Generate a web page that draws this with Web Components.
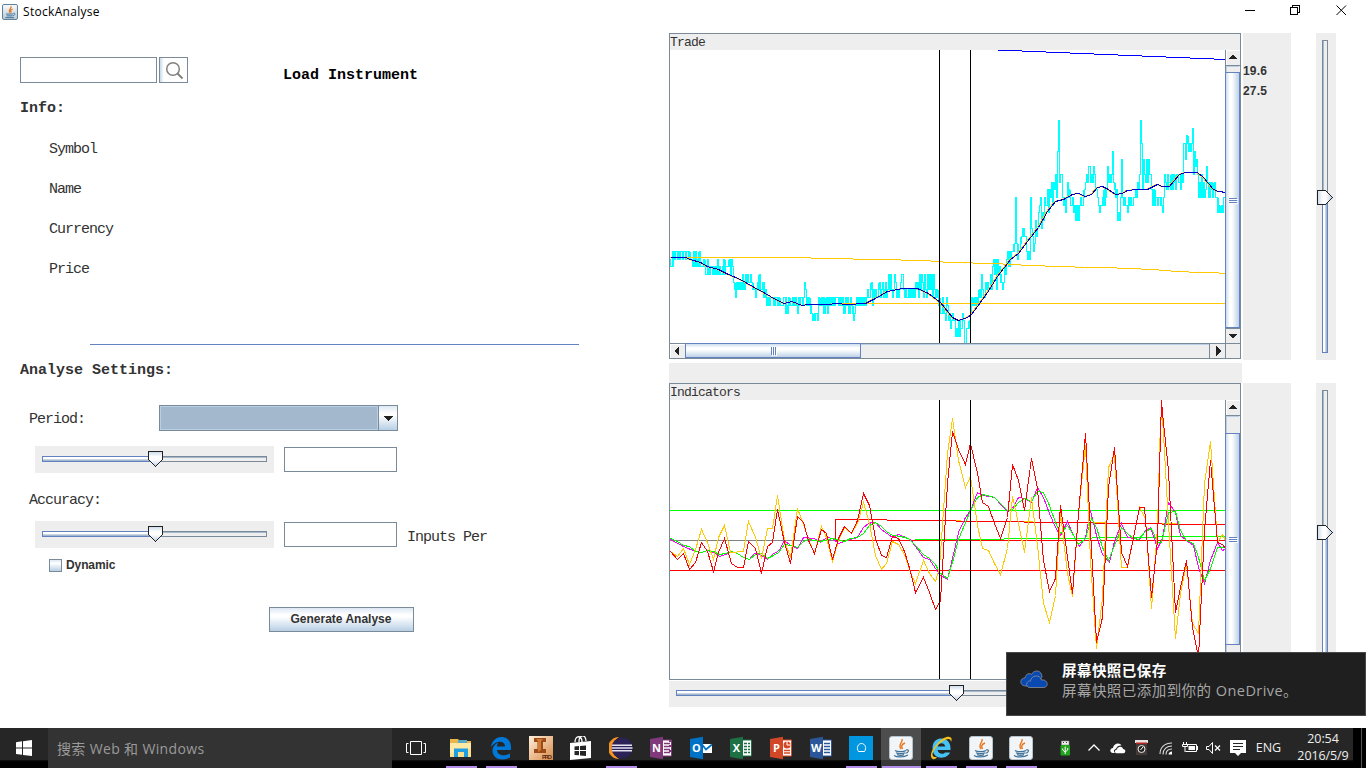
<!DOCTYPE html>
<html lang="en">
<head>
<meta charset="utf-8">
<title>StockAnalyse</title>
<style>
html,body{margin:0;height:100%;overflow:hidden;background:#fff}
body{font-family:"Liberation Sans",Arial,sans-serif;color:#333}
</style>
</head>
<body>
<stock-desktop></stock-desktop>
<script>
const define = (name, html, setup) => customElements.define(name, class extends HTMLElement {
  connectedCallback() {
    if (this.shadowRoot) return;
    const root = this.attachShadow({ mode: 'open' });
    root.innerHTML = typeof html === 'function' ? html(this) : html;
    if (setup) setup(this, root);
  }
});

/* ---------- small Swing widgets ---------- */
define('swing-field', `<style>
:host{display:block;box-sizing:border-box;border:1px solid #7a8a99;background:#fff;box-shadow:inset -1px 1px #fff}
</style>`);

define('swing-label', `<style>
:host{display:block;font:15px/20px "Liberation Mono",monospace;letter-spacing:-1px;color:#333;white-space:pre}
:host([bold]){font-weight:bold;letter-spacing:0}
:host([small]){font-size:13px;line-height:18px;letter-spacing:-.8px}
span{display:block;padding-top:2px;margin-bottom:-2px}
:host([small]) span{padding-top:0;margin:0}
</style><span><slot></slot></span>`);

define('swing-button', `<style>
:host{display:flex;align-items:center;justify-content:center;box-sizing:border-box;border:1px solid #7a8a99;
background:linear-gradient(#dde8f3,#fff 30%,#fff 38%,#b8cfe5);font:bold 12px "Liberation Sans",sans-serif;color:#333;white-space:nowrap}
</style><slot></slot>`);

define('swing-check', `<style>
:host{display:flex;align-items:center;gap:4px;font:bold 12px/14px "Liberation Sans",sans-serif;color:#333;letter-spacing:-.1px}
i{width:11px;height:11px;border:1px solid #7a8a99;background:linear-gradient(#dde8f3,#fff 30%,#b8cfe5)}
</style><i></i><span><slot></slot></span>`);

define('swing-combo', `<style>
:host{display:flex;box-sizing:border-box;border:1px solid #7a8a99;background:#a3b8cc}
.v{flex:1;border:1px solid #b8cfe5;border-right-color:#b8cfe5}
.b{width:18px;border-left:1px solid #7a8a99;background:linear-gradient(#dde8f3,#fff 30%,#fff 38%,#b8cfe5);display:flex;align-items:center;justify-content:center}
svg{display:block;margin-right:1px}
</style><div class="v"></div><div class="b"><svg width="10" height="5" shape-rendering="crispEdges"><path d="M0 0H10L5 5Z" fill="#222"/></svg></div>`);

define('swing-slider', el => {
  const len = +el.getAttribute('length'), at = +el.getAttribute('at'), v = el.hasAttribute('vertical');
  const cross = v ? 20 : +(el.getAttribute('depth') || 27), a = v ? 6 : 10;
  const s = 7, e = len - 7;
  let body;
  if (!v) body = `<g transform="translate(0 ${cross - 27})">
    <rect x="${at}.5" y="${a}.5" width="${e - at - 1}" height="5" fill="#eee" stroke="#7a8a99"/><path d="M${at} ${a + 1}.5H${e - 1}" stroke="#a3b8cc"/>
    <rect x="${s}.5" y="${a}.5" width="${at - s}" height="5" fill="url(#g)" stroke="#6382bf"/>
    <path d="M${at - 7}.5 5.5H${at + 7}.5V13.5L${at}.5 20.5L${at - 7}.5 13.5Z" fill="url(#t)" stroke="#222"/></g>`;
  else body = `
    <rect x="${a}.5" y="${s}.5" width="5" height="${at - s}" fill="#eee" stroke="#7a8a99"/><path d="M${a + 1}.5 ${s + 1}V${at}" stroke="#a3b8cc"/>
    <rect x="${a}.5" y="${at}.5" width="5" height="${e - at - 1}" fill="url(#g)" stroke="#6382bf"/>
    <path d="M1.5 ${at - 7}.5H9.5L16.5 ${at}.5L9.5 ${at + 7}.5H1.5Z" fill="url(#t)" stroke="#222"/>`;
  const dir = v ? 'x2="1" y2="0"' : 'x2="0" y2="1"';
  return `<style>:host{display:block;background:#eee;overflow:hidden}svg{display:block}</style>
  <svg width="${v ? cross : len}" height="${v ? len : cross}" shape-rendering="crispEdges"><defs>
  <linearGradient id="g" ${dir}><stop offset=".2" stop-color="#fff"/><stop offset=".4" stop-color="#fff"/><stop offset=".75" stop-color="#a3b8cc"/></linearGradient>
  <linearGradient id="t" ${dir}><stop stop-color="#c8d9eb"/><stop offset=".35" stop-color="#fff"/><stop offset=".55" stop-color="#fff"/><stop offset="1" stop-color="#b8cfe5"/></linearGradient>
  </defs>${body}</svg>`;
});

define('swing-scrollbar', el => {
  const v = el.hasAttribute('vertical');
  const len = +el.getAttribute('length'), a = +el.getAttribute('from'), b = +el.getAttribute('to');
  const m = Math.round((a + b) / 2) + 1, g = [-3, -1, 1].map(d => v
    ? `<path d="M4 ${m + d}.5H12" stroke="#6382bf"/><path d="M5 ${m + d + 1}.5H13" stroke="#fff"/>`
    : `<path d="M${m + d}.5 4V12" stroke="#6382bf"/><path d="M${m + d + 1}.5 5V13" stroke="#fff"/>`).join('');
  const svg = v ? `<svg width="15" height="${len}" shape-rendering="crispEdges">
    <defs><linearGradient id="g"><stop stop-color="#c5d8ea"/><stop offset=".3" stop-color="#fff"/><stop offset=".45" stop-color="#fff"/><stop offset="1" stop-color="#b8cfe5"/></linearGradient></defs>
    <rect width="15" height="${len}" fill="#eee"/><path d="M.5 0V${len}" stroke="#7a8a99"/>
    <path d="M1.5 16V${len - 16}M1 16.5H14" stroke="#b8cfe5"/><path d="M1.5 0V15M1 .5H15" stroke="#fff"/>
    <path d="M1 15.5H15M1 ${len - 15}.5H15" stroke="#7a8a99"/>
    <path d="M8 5H9V6H10V7H11V8H12V9H4V8H5V7H6V6H7V5Z" fill="#222"/>
    <path d="M4 ${len - 9}H12V${len - 8}H11V${len - 7}H10V${len - 6}H9V${len - 5}H7V${len - 6}H6V${len - 7}H5V${len - 8}H4Z" fill="#222"/>
    <rect x=".5" y="${a}.5" width="14" height="${b - a}" fill="url(#g)" stroke="#6382bf"/>${g}</svg>`
  : `<svg width="${len}" height="15" shape-rendering="crispEdges">
    <defs><linearGradient id="g" x2="0" y2="1"><stop stop-color="#c5d8ea"/><stop offset=".3" stop-color="#fff"/><stop offset=".45" stop-color="#fff"/><stop offset="1" stop-color="#b8cfe5"/></linearGradient></defs>
    <rect width="${len}" height="15" fill="#eee"/><path d="M0 .5H${len}" stroke="#7a8a99"/><path d="M16 1.5H${len - 17}" stroke="#b8cfe5"/><path d="M.5 1V15M0 1.5H15" stroke="#fff"/>
    <path d="M${len - 17}.5 1V15M${len - 1}.5 1V15" stroke="#7a8a99"/>
    <path d="M4 8L9 3V13Z" fill="#222"/><path d="M${len - 10} 3L${len - 5} 8L${len - 10} 13Z" fill="#222"/>
    <rect x="${a}.5" y=".5" width="${b - a}" height="14" fill="url(#g)" stroke="#6382bf"/>${g}</svg>`;
  return `<style>:host{display:block}svg{display:block}</style>${svg}`;
});

/* ---------- charts: coordinates are in window pixels ---------- */
const ticks =
 'STTRSRRRSR SRRSRRSRRR SSSTRTRTST RTTTSTUUSU TTTUTUTUSU TUUTSUTTTT SUSTVWXVWV WVWUVWUVUV VUVWWWXWVW UWWVVXWYXX' +
 'YXXXXYXXYX YYYYXXXZYX YYYXYXXYZX YXXYXVWYXX YYZaaZZZaX YYXYXZYXZX YXYXYXXXXX YXYXZYXYXY ZXYZaZYXYX YXYXYXYXWX' +
 'XWVYWXWXXW VXWVXWVXWU WUWXWUVXWX WVUUWXWXXW XWXWXWVWVX UWUVXUWXUW UWUXUWXWXX YZZXYZaXYa ZbaZaacbcc abbZaddbbb' +
 'aZXYYXYXYX WXUWXXVWVW WUWTSUSWSU TUVWVTUSRT RSRRRQKQSR RQPOOPPRSR SKOPRQNPOM LKOMNKLLJM JKILIJHKEA IHHKLKMKIJ' +
 'KLLKMLLNLN LKLLKJIHIG GHIHGHJJKL MLLKLJKJGI HIHEIJKJNM NKFKLKLLMK LKLLKKJKIJ HADJFHIFIF HHJLJLKKLK KKLMKHIJHI' +
 'IJHJHIJHHI IJHIDDFCDE DEDBHEGFHK IKHKIKJGIK IJIKJIKKML MMLMK';
const levels = [...ticks.replace(/ /g, '')].map(c => c < 'a' ? c.charCodeAt(0) - 65 : c.charCodeAt(0) - 71);
const levelY = k => Math.round(120 + k * 7.7) + .5;
const step = levels.map((k, i) => (i ? `V${levelY(k)}` : `M669.5 ${levelY(k)}`) + `H${670.5 + i}`).join('');
/* quotes that bounce back inside one pixel column */
const bounce = levels.map((k, i) => {
  const near = levels.slice(Math.max(0, i - 1), i + 3), lo = Math.min(...near), hi = Math.max(...near);
  return hi > lo && hi - lo < 3 && (i * 7) % 5 < 2 ? `M${670.5 + i} ${levelY(lo)}V${levelY(hi)}` : '';
}).join('');
const avg = '670,257 685,257 690,259 700,262 707,266 718,269 728,274 740,279 752,286 765,293 775,299 784,303 791,301 802,305 808,304 828,304 835,303 847,304 865,303 875,298 887,291 902,288 917,288 928,293 940,302 952,317 958,320 967,317 971,314 977,306 987,292 997,276 1010,259 1018,253 1027,241 1038,227 1047,211 1055,201 1063,199 1072,194 1078,193 1085,196 1091,194 1097,187 1102,186 1108,189 1115,194 1122,193 1127,190 1137,189 1147,189 1157,184 1162,186 1169,186 1179,174 1185,172 1197,172 1203,177 1213,189 1218,191 1226,192';
define('trade-chart', `<style>:host{display:block;background:#fff}svg{display:block}polyline,path{fill:none}</style>
<svg width="556" height="293" viewBox="670 50 556 293" shape-rendering="crispEdges">
<path d="${step}${bounce}" stroke="#0ff"/>
<path d="M685 257.5H811M811 258.5H853M853 259.5H901M901 260.5H931M931 261.5H943M943 262.5H973M973 263.5H1003M1003 264.5H1021M1021 265.5H1045M1045 266.5H1075M1075 267.5H1117M1117 268.5H1141M1141 269.5H1159M1159 270.5H1171M1171 271.5H1189M1189 272.5H1219M1219 273.5H1226" stroke="#ffc800"/>
<path d="M840 303.5H1226" stroke="#ffc800"/>
<polyline transform="translate(-.5 .5)" points="${avg}" stroke="#ffc800"/>
<polyline transform="translate(.5 .5)" points="${avg}" stroke="#00c"/>
<path d="M998 50.5H1022M1022 51.5H1046M1046 52.5H1070M1070 53.5H1094M1094 54.5H1118M1118 55.5H1142M1142 56.5H1166M1166 57.5H1190M1190 58.5H1214M1214 59.5H1226" stroke="#00f"/>
<path d="M939.5 50V343M970.5 50V343" stroke="#000"/>
</svg>`);

define('indicator-chart', `<style>:host{display:block;background:#fff}svg{display:block}polyline,path{fill:none}</style>
<svg width="556" height="279" viewBox="670 400 556 279" shape-rendering="crispEdges">
<path d="M670 540.5H836" stroke="#808080"/>
<path d="M670 510.5H1226M915 539.5H1004M1004 538.5H1092M1092 537.5H1156M1156 536.5H1226" stroke="#0f0"/>
<path d="M956 520.5H961M1024 521.5H1033M1093 522.5H1106M1162 523.5H1178" stroke="#ffc800"/>
<path d="M670 570.5H1226M835.5 540.5V519.5M835 540.5H1226M835 519.5H887M887 520.5H956M956 521.5H1024M1024 522.5H1093M1093 523.5H1162M1162 524.5H1226" stroke="#f00"/>
<g transform="translate(.5 .5)">
<polyline stroke="#f0f" points="670,539 683,546 695,551 701,552 707,550 713,552 719,556 725,554 731,551 737,553 743,557 749,559 754,553 760,554 767,559 773,553 778,551 784,540 790,545 797,548 803,537 814,538 820,542 826,537 832,538 838,543 850,539 857,537 863,527 868,523 872,522 875,522 881,529 892,537 898,534 910,539 923,557 929,559 939,574 947,579 952,558 958,532 965,517 970,510 977,492 982,495 994,497 1007,511 1012,508 1018,497 1024,498 1031,502 1037,487 1043,497 1049,513 1055,527 1060,535 1067,521 1072,533 1079,546 1085,537 1090,510 1096,535 1102,554 1109,562 1114,541 1121,523 1127,537 1139,539 1145,530 1150,527 1157,548 1162,538 1168,502 1175,512 1180,535 1186,540 1193,545 1198,567 1204,583 1210,560 1217,542 1222,550 1226,548"/>
<polyline stroke="#0f0" points="670,538 677,541 683,545 689,546 695,551 701,552 707,550 713,551 719,554 725,553 731,551 737,553 743,557 749,559 755,554 761,553 767,558 773,555 778,552 784,544 791,545 797,547 803,541 808,539 820,541 832,538 844,541 850,538 857,537 863,533 869,525 875,522 881,526 886,531 892,535 900,536 908,538 915,545 923,554 929,558 935,564 939,572 947,578 952,562 958,539 965,522 970,510 977,497 983,494 994,497 1007,510 1012,509 1018,502 1024,498 1031,501 1037,491 1043,492 1049,505 1055,522 1060,533 1067,525 1072,533 1078,544 1085,538 1091,518 1096,527 1102,547 1108,560 1114,545 1121,527 1127,533 1133,538 1138,539 1145,531 1151,528 1157,542 1161,542 1168,512 1175,511 1180,530 1186,540 1193,543 1198,557 1204,580 1210,568 1217,547 1226,547"/>
<polyline stroke="#ffc800" points="670,551 677,556 683,548 689,564 695,549 701,529 707,542 713,559 718,537 724,525 730,552 743,551 748,521 755,537 761,558 767,528 772,528 777,495 784,540 790,557 797,508 803,524 808,539 814,553 821,526 826,537 832,561 838,540 844,527 851,533 857,523 863,502 869,523 875,555 881,569 886,563 892,541 898,544 904,554 910,572 915,583 923,560 929,573 935,581 939,567 947,453 952,418 958,460 965,487 970,476 977,525 982,548 988,550 994,563 1000,574 1007,548 1012,496 1018,523 1024,552 1031,497 1037,545 1043,603 1049,622 1055,595 1060,513 1067,573 1072,596 1078,513 1085,445 1090,560 1096,648 1102,597 1108,467 1114,454 1121,567 1127,567 1133,537 1139,507 1145,518 1151,608 1157,527 1160,420 1162,416 1168,523 1175,638 1180,593 1186,563 1192,623 1198,633 1204,483 1210,441 1217,542 1222,534 1226,542"/>
<polyline stroke="#f00" points="670,551 677,559 683,553 689,569 695,562 701,542 707,551 713,571 718,552 724,538 731,563 737,567 743,567 748,541 755,548 761,573 767,546 772,542 777,509 784,542 790,563 797,516 803,522 808,540 814,553 821,529 826,533 832,559 838,538 844,526 851,533 857,520 863,493 869,505 875,538 881,555 886,557 892,536 898,538 904,551 910,571 915,592 923,577 929,592 935,609 940,600 947,483 952,431 958,449 965,464 970,443 977,473 982,502 988,506 994,523 1000,538 1007,517 1012,464 1018,480 1024,510 1031,458 1037,488 1043,560 1049,591 1055,578 1060,505 1067,557 1072,593 1078,513 1085,433 1090,530 1096,642 1102,617 1108,487 1114,447 1121,552 1127,566 1133,537 1139,507 1144,507 1151,597 1157,540 1161,400 1162,413 1168,470 1175,612 1180,587 1186,560 1192,627 1198,657 1204,530 1210,460 1217,542 1222,544 1226,549"/>
</g>
<path d="M939.5 400V679M970.5 400V679" stroke="#000"/>
</svg>`);

define('chart-panel', `<style>
:host{display:block;box-sizing:border-box;width:572px;border:1px solid #7a8a99;border-bottom:0;background:#eee}
header{height:16px;overflow:hidden}
.row{display:flex;width:570px}
.row ::slotted(swing-scrollbar){margin-left:-1px}
</style><header><slot name="title"></slot></header><div class="row"><slot></slot></div><slot name="foot"></slot>`);

/* ---------- application icons ---------- */
const java = `<rect x=".5" y=".5" width="23" height="23" rx="2.5" fill="#f1f5f7" stroke="#b6c3cc"/>
<path d="M13 3C14.500 6 8.500 8 12 13M16 7C12.500 8.500 12 10 13.500 13" fill="none" stroke="#e8761d" stroke-width="1.400"/>
<path d="M6 14.500C8 16 15 16 17 14.500M7 16.800C9 18 14 18 16 16.800M17 14C21 13 19.500 17 16.500 17.200M5 19.500C8 21.500 15 21.500 19 19M8 18.600C10 19.400 13 19.400 15 18.600" fill="none" stroke="#42739a" stroke-width="1.200"/>`;
const office = (c, d, l, extra) => `<path d="M12 4H22.500V20H12Z" fill="#fff" stroke="${c}" stroke-width="1"/>${extra}<path d="M1 3L14 .8V23.200L1 21Z" fill="${d}"/><text x="7.400" y="16" text-anchor="middle" font-family="Open Sans" font-weight="bold" font-size="11" fill="#fff">${l}</text>`;
const lines = c => `<path d="M15 7.500H21M15 10.500H21M15 13.500H21M15 16.500H21" stroke="${c}" stroke-width="1.300"/>`;
const icons = {
  java,
  javawin: `<defs><linearGradient id="j" x2="0" y2="1"><stop stop-color="#fafcfd"/><stop offset="1" stop-color="#b9c9d6"/></linearGradient></defs><rect x=".8" y=".8" width="22.400" height="22.400" rx="2" fill="url(#j)" stroke="#5d7d96" stroke-width="1.500"/>
<path d="M13.500 3.500C15 7 8.500 8 12 13M16 7.500C12.500 9 12.500 10.500 14 13" fill="none" stroke="#e8761d" stroke-width="1.900"/>
<path d="M6 15H16.500M7 17.800H15.500M17 13.800C21 13 19.500 17.500 16 17.500M5 20.500H18" fill="none" stroke="#42739a" stroke-width="1.500"/>`,
  folder: `<path d="M1 3H9L11 5H22V21H1Z" fill="#e8b64a"/><path d="M9 4H18V7H9Z" fill="#58a8c7"/><path d="M1 7H22V21H1Z" fill="#fbe08c"/><path d="M1 7H22V12L1 18Z" fill="#fde9a6"/><path d="M5 21V12.500H19V21H15V16H9V21Z" fill="#1f9fe0"/>`,
  edge: `<path d="M2 11C3 4 8 1 12.500 1C19 1 22 6 22 11V14H8C8.500 20 16 20.500 21 17.500V21.500C12 26 3 22 3.500 14C3.800 10.500 6 8 9.500 6.500C8.500 8 8 9 8 10.500H16C16 4 7 4 2 11Z" fill="#0078d7"/>`,
  inventor: `<defs><linearGradient id="o" x2="1" y2="1"><stop stop-color="#fff0dc"/><stop offset="1" stop-color="#d88a48"/></linearGradient></defs><rect width="24" height="24" fill="url(#o)"/><path d="M5 2H17V6H14V13H17V17H5V13H8.500V6H5Z" fill="#9c4a16"/><path d="M7 3H14L12 5V14L9 16V5Z" fill="#d07c38"/><text x="13" y="23" font-family="Liberation Sans" font-weight="bold" font-size="6" textLength="10" fill="#5a2a10">PRO</text>`,
  store: `<path d="M1 7L22 5V22L1 24Z" fill="#fff"/><path d="M6 6C6 -1 13 -1 13 6M10 6C10 -2 17 -2 17 5" fill="none" stroke="#fff" stroke-width="1.300"/><path d="M5.500 10.500L10 10V14H5.500ZM11 10L17 9.400V14H11ZM5.500 15H10V19.300L5.500 19ZM11 15H17V20L11 19.400Z" fill="#262626"/>`,
  eclipse: `<path d="M10 1A11 11 0 0 0 10 23A13 13 0 0 1 10 1Z" fill="#f7941e"/><circle cx="13" cy="12" r="10.500" fill="#2c2255"/><path d="M3 8.500H23V10H3ZM2.500 11.300H23.500V12.800H2.500ZM3 14H23V15.500H3Z" fill="#e4e2f2"/>`,
  onenote: office('#80397b', '#80397b', 'N', lines('#80397b') + '<path d="M20 5H23M20 10H23M20 15H23" stroke="#80397b" stroke-width="2"/>'),
  outlook: office('#0072c6', '#0072c6', 'O', '<path d="M12 3H24V21H12Z" fill="#262626"/><path d="M13 8H23V17H13Z" fill="#fff"/><path d="M13 8.500L17 13.500L23 8.500" fill="none" stroke="#0072c6" stroke-width="1.800"/>'),
  excel: office('#1e7145', '#1e7145', 'X', lines('#1e7145') + '<path d="M18.500 5V19" stroke="#fff"/>'),
  powerpoint: office('#d24726', '#d24726', 'P', '<circle cx="18" cy="9" r="3.500" fill="#d24726"/><path d="M18 9V5M18 9H22" stroke="#fff"/><path d="M15 14.500H21M15 17H21" stroke="#d24726" stroke-width="1.300"/>'),
  word: office('#2b579a', '#2b579a', 'W', lines('#2b579a')),
  phone: `<rect width="24" height="24" fill="#0096e0"/><path d="M9.500 15.500C7 12 9 7.500 12.500 7.500C16 7.500 18 12 15.500 15.500Z" fill="none" stroke="#fff" stroke-width="1"/>`,
  ie: `<path d="M3.500 12.500C3.500 5 8 2.500 12.500 2.500C18.500 2.500 21.500 7 21.500 12.500V14H8.500C9.500 18.500 15 18.500 16 16.500H21C18 24 3.500 24 3.500 12.500ZM8.700 10.500H16.200C15.800 6 9.300 6 8.700 10.500Z" fill="#45c2f2" fill-rule="evenodd"/><path d="M4 23C-2 20 6 8 14 2.500C19 -.5 24.500 0 22 6C22 0 14 3.500 8 10C3 16 1 21.500 8 21C6.500 23 5 23.500 4 23Z" fill="#f6c21c"/>`,
  start: `<g fill="#fff"><path d="M4 6.300L10 5.300V11.500H4ZM11 5.200L20 4V11.500H11ZM4 12.500H10V18.800L4 18ZM11 12.500H20V20L11 19Z"/></g>`,
  taskview: `<path d="M6.500 5.500H17.500V18.500H6.500ZM4.500 7.500H2.500V16.500H4.500M19.500 7.500H21.500V16.500H19.500" fill="none" stroke="#fff"/>`,
  usb: `<path d="M8.500 5H16V9H8.500Z" fill="#eee" stroke="#888" stroke-width=".6"/><path d="M10 6.500H11M13 6.500H14" stroke="#333"/><rect x="7.500" y="9" width="9.500" height="10.500" rx="1" fill="#22a41f"/><path d="M12.200 10.500V18M9.700 12.500V14L12.200 16L14.700 14V12" fill="none" stroke="#fff"/>`,
  chevron: `<path d="M6.500 14.500L12 9L17.500 14.500" fill="none" stroke="#fff" stroke-width="1.300"/>`,
  cloud: `<path d="M7 17C3 16.500 4 12 7 12C7.500 7 14 6 15.500 9.500C10.500 9 11 12.500 9.500 13C7 14 8 16 9 17Z" fill="#fff"/><path d="M11 17.300C8 17.300 8.500 13.500 11 13.500C11.500 9.500 17 10 17 13C20 13 20 17 17.500 17.300Z" fill="#fff"/>`,
  disk: `<path d="M6 4H17V19H6Z" fill="#443a38"/><path d="M5 4H18V7H5Z" fill="#e6e1df"/><path d="M6 6.500H17V8H6Z" fill="#b22"/><circle cx="11.500" cy="13" r="3.500" fill="#222" stroke="#eee"/><path d="M10.500 14L13 11" stroke="#fff"/>`,
  wifi: `<path d="M6 18C6 11 11 7 18 7M9 18.500C9 13 13 10 18 10M12 18.500C12 15 14.500 13 18 13" fill="none" stroke="#ddd" stroke-width="1.100"/><path d="M14.500 18.500C14.500 17 16 15.500 18 15.500V18.500Z" fill="#fff"/>`,
  battery: `<path d="M9 8.500H18.500V15.500H7.500M19.500 10V14" fill="none" stroke="#fff"/><path d="M10.500 10H17V14H10.500Z" fill="#fff"/><path d="M5.500 6V8M8.500 6V8M4.500 8.500H9.500V10.500H4.500ZM7 11V16" fill="none" stroke="#fff"/>`,
  volume: `<path d="M4.500 10.500H7L10.500 6.500V17.500L7 13.500H4.500Z" fill="none" stroke="#fff"/><path d="M13 9.500L18 14.500M18 9.500L13 14.500" stroke="#fff" stroke-width="1.200"/>`,
  action: `<path d="M4 4H20V17H15L12 20L9 17H4Z" fill="#fff"/><path d="M7 7.500H17M7 10.500H17M7 13.500H14" stroke="#262626"/>`,
};
define('app-icon', el => `<style>:host{display:block;line-height:0}svg{display:block}</style><svg width="${el.getAttribute('size') || 24}" height="${el.getAttribute('size') || 24}" viewBox="0 0 24 24">${icons[el.getAttribute('name')]}</svg>`);

/* ---------- window ---------- */
define('title-bar', `<style>
:host{display:flex;align-items:center;height:24px;padding-left:2px;color:#000;font:12px "Open Sans",sans-serif}
span{margin:-2px 0 0 5px;flex:1;letter-spacing:.3px}
svg{display:block}
app-icon{margin-top:-1px}
</style><app-icon name="javawin" size="16"></app-icon><span>StockAnalyse</span>
<svg width="130" height="24" viewBox="1236 0 130 24" fill="none" stroke="#000"><path d="M1245 10.500H1255M1290.500 7.500H1297.500V14.500H1290.500ZM1292.500 7V5.500H1299.500V12.500H1298" shape-rendering="crispEdges"/><path d="M1336.500 5.500L1346 15M1346 5.500L1336.500 15"/></svg>`);

define('settings-form', `<style>
:host{display:block;width:669px;padding-top:33px;box-sizing:border-box}
.r{display:flex}
.info{margin:11px 0 0 49px}.info swing-label{line-height:40px}
hr{margin:56px 0 0 90px;border:0;width:489px;height:1px;background:#6382bf}
.sl{width:239px}
.glass{width:29px;background:linear-gradient(90deg,#c8d9ea,#fff 14%)}
.glass svg{margin-left:1px}
</style>
<div class="r" style="padding-left:20px;height:26px"><swing-field style="width:137px"></swing-field>
<swing-button class="glass" style="margin-left:2px"><svg width="19" height="19" fill="none" stroke="#808080"><circle cx="8" cy="8" r="6.300" stroke-width="1.500"/><path d="M12.500 12.500L17.500 17.500" stroke-width="2"/></svg></swing-button>
<swing-label bold style="margin:7px 0 0 95px;color:#000">Load Instrument</swing-label></div>
<swing-label bold style="margin:14px 0 0 20px">Info:</swing-label>
<div class="info"><swing-label>Symbol</swing-label><swing-label>Name</swing-label><swing-label>Currency</swing-label><swing-label>Price</swing-label></div>
<hr>
<swing-label bold style="margin:14px 0 0 20px">Analyse Settings:</swing-label>
<div class="r" style="margin-top:26px;height:26px;padding-left:29px"><swing-label style="width:130px;margin-top:3px">Period:</swing-label><swing-combo style="width:239px"></swing-combo></div>
<div class="r" style="margin-top:15px;height:27px;padding-left:35px"><swing-slider class="sl" length="239" at="120"></swing-slider><swing-field style="width:113px;height:25px;margin:1px 0 0 10px"></swing-field></div>
<swing-label style="margin:16px 0 0 29px">Accuracy:</swing-label>
<div class="r" style="margin-top:12px;height:27px;padding-left:35px"><swing-slider class="sl" length="239" at="120"></swing-slider><swing-field style="width:113px;height:25px;margin:1px 0 0 10px"></swing-field><swing-label style="margin:5px 0 0 10px">Inputs Per</swing-label></div>
<swing-check style="margin:10px 0 0 49px">Dynamic</swing-check>
<swing-button style="margin:35px 0 0 269px;width:145px;height:25px;padding:0 1px 2px 0">Generate Analyse</swing-button>`);

define('chart-area', `<style>
:host{display:grid;grid-template-columns:573px 49px 20px;grid-template-rows:327px 20px 325px;padding-top:9px;box-sizing:border-box}
.g{background:#eee;margin-left:1px}
.s{margin-left:25px;width:20px}
.bar{background:#eee}
.gap{margin-top:3px}
.vals{font:bold 12px/20px "Liberation Sans",sans-serif;padding-top:28px;box-sizing:border-box;letter-spacing:.15px}
.foot{display:flex}
.foot i{flex:1;border-top:1px solid #7a8a99;height:14px}
.end{height:1px;background:#7a8a99}
.two swing-slider{margin-top:1px}
.bar{margin-top:3px;height:20px}
.low{margin-top:3px}
</style>
<div><chart-panel><swing-label small slot="title">Trade</swing-label><trade-chart></trade-chart><swing-scrollbar vertical length="293" from="22" to="277"></swing-scrollbar>
<div slot="foot"><div class="foot"><swing-scrollbar length="556" from="15" to="190"></swing-scrollbar><i></i></div><div class="end"></div></div></chart-panel></div>
<div class="g vals">19.6<br>27.5</div><swing-slider class="s" vertical length="327" at="164"></swing-slider>
<div class="bar"></div><div></div><div></div>
<div class="two low"><chart-panel><swing-label small slot="title">Indicators</swing-label><indicator-chart></indicator-chart><swing-scrollbar vertical length="279" from="33" to="244"></swing-scrollbar><div slot="foot" class="end"></div></chart-panel>
<swing-slider length="573" at="287" depth="26"></swing-slider></div>
<div class="g low"></div><swing-slider class="s low" vertical length="325" at="149"></swing-slider>`);

define('toast-note', `<style>
:host{display:flex;box-sizing:border-box;background:#1f1f1f;border:1px solid #484848;width:360px;height:64px;padding:8px 0 0 13px;color:#a6a6a6;font:14.500px/20px "Open Sans","Noto Sans CJK SC",sans-serif;letter-spacing:.45px}
svg{margin:8px 14px 0 0;flex:none}
b{display:block;color:#fff}p{margin:0;white-space:nowrap}
</style><svg width="28" height="20" viewBox="0 0 28 20"><g fill="#094ab2" stroke="#8b8f96" stroke-width=".8"><path d="M6 17C-1 17-.5 9 5 9C6 4 10 4 11.500 5.500C14 0 22 1 22 8L14 17Z"/><path d="M10 18.500C5 18.500 6 11.500 10.500 12C11 6 20 5 21.500 11C28 10 29 18 24 18.500Z"/></g></svg>
<p><b>屏幕快照已保存</b>屏幕快照已添加到你的 OneDrive。</p>`);

define('task-button', `<style>
:host{display:flex;flex-direction:column;align-items:center;justify-content:space-between;width:40px;height:40px;padding-top:8px;box-sizing:border-box}
:host([active]){background:linear-gradient(#4d4d4d 32px,#383838 32px)}
i{height:2px;width:31px}:host([open]) i{background:#b48ee8}:host([active]) i{width:39px}
</style><slot></slot><i></i>`);

define('task-bar', `<style>
:host{display:flex;height:40px;background:linear-gradient(#262626 32px,#111 32px,#000 34px);color:#eee;font:12.500px "Open Sans",sans-serif}
.st{width:48px;padding:8px 12px;box-sizing:border-box}
.q{width:344px;background:#333;color:#9a9a9a;font:14px/41px "Open Sans","Noto Sans CJK SC",sans-serif;letter-spacing:.35px;padding-left:9px;box-sizing:border-box}
.tv{width:49px;padding:8px 12px;box-sizing:border-box}
.tray{display:flex;padding:8px 0 0 12px}
.tray :first-child{margin-right:5px}
.eng{width:37px;text-align:center;line-height:40px}
.clk{width:60px;margin-left:6px;text-align:center;line-height:17px;padding-top:2px;letter-spacing:-.1px}
.black{background:#000;flex:1;display:flex}
.black i{margin-left:8px;width:1px;background:#555}
</style>
<div class="st"><app-icon name="start"></app-icon></div><div class="q">搜索 Web 和 Windows</div><div class="tv"><app-icon name="taskview"></app-icon></div>
${['folder*', 'edge*', 'inventor', 'store', 'eclipse*', 'onenote', 'outlook', 'excel', 'powerpoint', 'word', 'phone*', 'java*!', 'ie*', 'java*', 'java*'].map(n => `<task-button${n.includes('*') ? ' open' : ''}${n.includes('!') ? ' active' : ''}><app-icon name="${n.replace(/[*!]/g, '')}"></app-icon></task-button>`).join('')}
<div class="tray">${['usb', 'chevron', 'cloud', 'disk', 'wifi', 'battery', 'volume', 'action'].map(n => `<app-icon name="${n}"></app-icon>`).join('')}</div>
<div class="eng">ENG</div><div class="clk">20:54<br>2016/5/9</div><div class="black"><i></i></div>`);

define('stock-desktop', `<style>
:host{display:flex;flex-direction:column;width:1366px;height:768px;background:#fff;position:relative;overflow:hidden}
main{display:flex;height:704px}
toast-note{position:absolute;left:1006px;top:652px}
</style><title-bar></title-bar><main><settings-form></settings-form><chart-area></chart-area></main><task-bar></task-bar><toast-note></toast-note>`);
</script>
</body>
</html>
